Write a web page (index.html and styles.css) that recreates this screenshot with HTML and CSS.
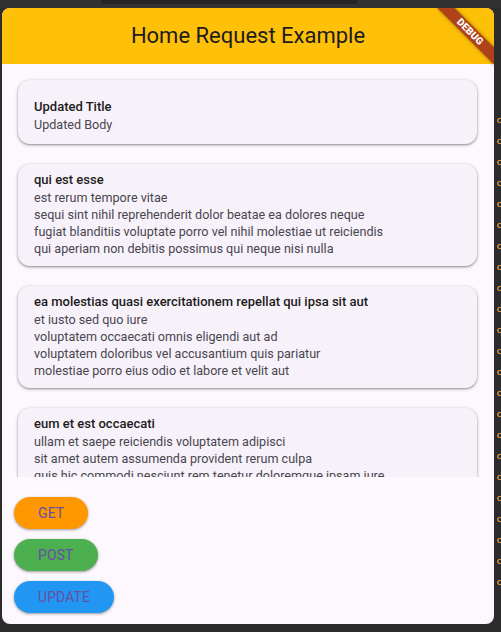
FILE: index.html
```html
<!DOCTYPE html>
<html>
<head>
<meta charset="utf-8">
<title>Home Request Example</title>
<link rel="stylesheet" href="styles.css">
</head>
<body>
<div class="top"><div class="notch"></div></div>
<div class="row">
  <div class="window">
    <header class="appbar"><h1>Home Request Example</h1></header>
    <div class="banner">DEBUG</div>
    <main class="list">
      <div class="card first">
        <div class="title">Updated Title</div>
        <p class="body">Updated Body</p>
      </div>
      <div class="card">
        <div class="title">qui est esse</div>
        <p class="body">est rerum tempore vitae<br>sequi sint nihil reprehenderit dolor beatae ea dolores neque<br>fugiat blanditiis voluptate porro vel nihil molestiae ut reiciendis<br>qui aperiam non debitis possimus qui neque nisi nulla</p>
      </div>
      <div class="card">
        <div class="title">ea molestias quasi exercitationem repellat qui ipsa sit aut</div>
        <p class="body">et iusto sed quo iure<br>voluptatem occaecati omnis eligendi aut ad<br>voluptatem doloribus vel accusantium quis pariatur<br>molestiae porro eius odio et labore et velit aut</p>
      </div>
      <div class="card">
        <div class="title">eum et est occaecati</div>
        <p class="body">ullam et saepe reiciendis voluptatem adipisci<br>sit amet autem assumenda provident rerum culpa<br>quis hic commodi nesciunt rem tenetur doloremque ipsam iure<br>quis sunt voluptatem rerum illo velit</p>
      </div>
      <div class="card">
        <div class="title">nesciunt quas odio</div>
        <p class="body">repudiandae veniam quaerat sunt sed<br>alias aut fugiat sit autem sed est<br>voluptatem omnis possimus esse voluptatibus quis<br>est aut tenetur dolor neque</p>
      </div>
    </main>
    <div class="actions">
      <button class="btn get">GET</button>
      <button class="btn post">POST</button>
      <button class="btn update">UPDATE</button>
    </div>
  </div>
  <div class="gutter"><div class="dots"></div></div>
</div>
</body>
</html>
```
FILE: styles.css
```css
html, body {
  margin: 0;
  padding: 0;
}
body {
  width: 501px;
  height: 632px;
  overflow: hidden;
  background: #2c2c2c;
  font-family: Roboto, "Noto Sans", "Liberation Sans", sans-serif;
}
.top {
  height: 8px;
  background: #323232;
}
.notch {
  margin-left: 101px;
  width: 257px;
  height: 4px;
  background: #252525;
  border-radius: 0 0 6px 6px;
}
.row {
  display: flex;
  padding-left: 2px;
}
.window {
  position: relative;
  width: 492px;
  height: 616px;
  background: #fdf7fe;
  border-radius: 8px;
  overflow: hidden;
  display: flex;
  flex-direction: column;
}
.appbar {
  height: 56px;
  flex: none;
  background: #ffc107;
  display: flex;
  align-items: center;
  justify-content: center;
}
.appbar h1 {
  margin: 0;
  font-size: 22px;
  line-height: 28px;
  font-weight: 400;
  color: #1d1b20;
}
.banner {
  position: absolute;
  top: 18px;
  right: -16px;
  width: 80px;
  height: 12px;
  transform: rotate(45deg);
  background: #b0421a;
  box-shadow: 0 0 4px rgba(0, 0, 0, 0.45);
  color: #fff;
  font-size: 10px;
  font-weight: 900;
  line-height: 12px;
  text-align: center;
  letter-spacing: 0.2px;
}
.list {
  flex: 1;
  overflow: hidden;
  padding-top: 15.5px;
}
.card {
  margin: 0 17px 20px 16px;
  padding: 7px 16px 9px;
  background: #f7f2fa;
  border-radius: 12px;
  box-shadow: 0 1px 2px rgba(0, 0, 0, 0.3), 0 1px 3px 1px rgba(0, 0, 0, 0.13);
}
.card.first {
  padding: 18px 16px 11px;
}
.title {
  font-size: 13px;
  line-height: 18px;
  font-weight: 500;
  color: #1d1b20;
}
.body {
  margin: 0;
  font-size: 12.6px;
  line-height: 17px;
  color: #49454f;
}
.actions {
  flex: none;
  height: 147px;
  box-sizing: border-box;
  padding: 20px 12px 11px;
  display: flex;
  flex-direction: column;
  align-items: flex-start;
  gap: 10px;
}
.btn {
  height: 32px;
  padding: 0 24px;
  border: none;
  border-radius: 16px;
  font-family: Roboto, "Noto Sans", sans-serif;
  font-size: 14px;
  line-height: 32px;
  font-weight: 400;
  letter-spacing: 0.1px;
  color: #6750a4;
  box-shadow: 0 1px 2px rgba(0, 0, 0, 0.25), 0 1px 3px 1px rgba(0, 0, 0, 0.1);
}
.get { background: #ff9800; }
.post { background: #4caf50; }
.update { background: #2196f3; }
.gutter {
  flex: 1;
}
.dots {
  margin-top: 101.5px;
  height: 483px;
  background-image: radial-gradient(circle at 6px 10.5px, transparent 0 1.4px, #c98a3f 1.6px 2.6px, transparent 2.9px);
  background-size: 7px 21px;
  background-repeat: repeat-y;
}
```
